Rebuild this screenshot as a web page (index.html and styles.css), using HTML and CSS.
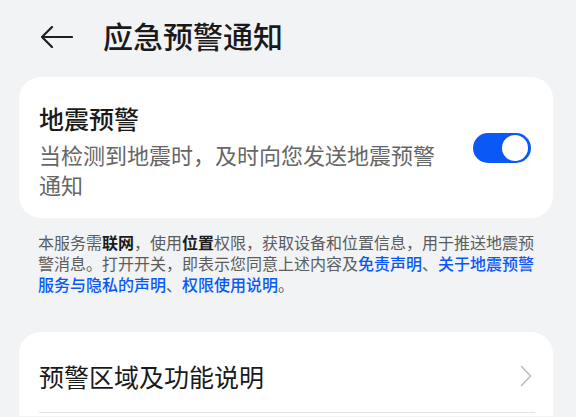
FILE: index.html
```html
<!DOCTYPE html>
<html lang="zh-CN">
<head>
<meta charset="utf-8">
<link rel="stylesheet" href="styles.css">
</head>
<body>
<div class="page">
  <header class="header">
    <svg class="back" width="32" height="22" viewBox="0 0 32 22" fill="none" stroke="#1f1f1f" stroke-width="2.2" stroke-linecap="round" stroke-linejoin="round">
      <path d="M11 1 L1 11 L11 21 M1.5 11 H31"/>
    </svg>
    <h1 class="title">应急预警通知</h1>
  </header>

  <section class="card card-main">
    <div class="main-text">
      <div class="main-title">地震预警</div>
      <div class="main-sub">当检测到地震时，及时向您发送地震预警通知</div>
    </div>
    <div class="switch"><span class="knob"></span></div>
  </section>

  <p class="note">本服务需<b>联网</b>，使用<b>位置</b>权限，获取设备和位置信息，用于推送地震预警消息。打开开关，即表示您同意上述内容及<a class="link">免责声明</a>、<a class="link">关于地震预警服务与隐私的声明</a>、<a class="link">权限使用说明</a>。</p>

  <section class="card card-list">
    <div class="row">
      <span class="row-label">预警区域及功能说明</span>
      <svg class="chev" width="12" height="22" viewBox="0 0 12 22" fill="none" stroke="#bdbdbd" stroke-width="1.6" stroke-linecap="round" stroke-linejoin="round">
        <path d="M1.5 1.5 L10.5 11 L1.5 20.5"/>
      </svg>
    </div>
  </section>
</div>
</body>
</html>
```

FILE: styles.css
```css
* { box-sizing: border-box; }
html, body {
  margin: 0;
  padding: 0;
  background: #f1f3f5;
}
body {
  font-family: "Noto Sans CJK SC", "Noto Sans", sans-serif;
  color: #1a1a1a;
  width: 576px;
  height: 417px;
  overflow: hidden;
}
.page {
  display: flex;
  flex-direction: column;
}
.header {
  height: 70px;
  display: flex;
  align-items: center;
  padding-left: 41px;
  gap: 30px;
}
.back {
  margin-top: 4px;
  flex: none;
}
.title {
  margin: 0;
  font-size: 30px;
  font-weight: 500;
  line-height: 40px;
  color: #1a1a1a;
}
.card {
  background: #ffffff;
  border-radius: 22px;
  margin: 0 23px 0 19px;
}
.card-main {
  margin-top: 7px;
  display: flex;
  align-items: center;
  padding: 24px 22px 19px 20px;
}
.main-text {
  width: 404px;
  flex: none;
}
.main-title {
  font-size: 25px;
  line-height: 34px;
  font-weight: 500;
  color: #1a1a1a;
}
.main-sub {
  margin-top: 4px;
  font-size: 22px;
  line-height: 30px;
  color: #666666;
}
.switch {
  margin-left: auto;
  width: 58px;
  height: 30px;
  border-radius: 15px;
  background: #0a59f7;
  display: flex;
  align-items: center;
  justify-content: flex-end;
  padding-right: 3px;
  margin-top: -5px;
}
.knob {
  width: 26px;
  height: 26px;
  border-radius: 50%;
  background: #ffffff;
}
.note {
  margin: 14px 0 0 0;
  padding: 0 38px;
  font-size: 16px;
  line-height: 21px;
  color: #5c5c5c;
}
.note b {
  font-weight: 700;
  color: #1a1a1a;
}
.link {
  color: #0a59f7;
  font-weight: 500;
  text-decoration: none;
}
.card-list {
  margin-top: 37px;
  padding: 8px 18px 0 20px;
  border-radius: 22px 22px 0 0;
  height: 84px;
}
.row {
  height: 73px;
  display: flex;
  align-items: center;
  justify-content: space-between;
  border-bottom: 1px solid #e3e3e3;
}
.row-label {
  font-size: 25px;
  line-height: 34px;
  color: #1a1a1a;
}
.chev {
  margin-right: 3px;
}
```
